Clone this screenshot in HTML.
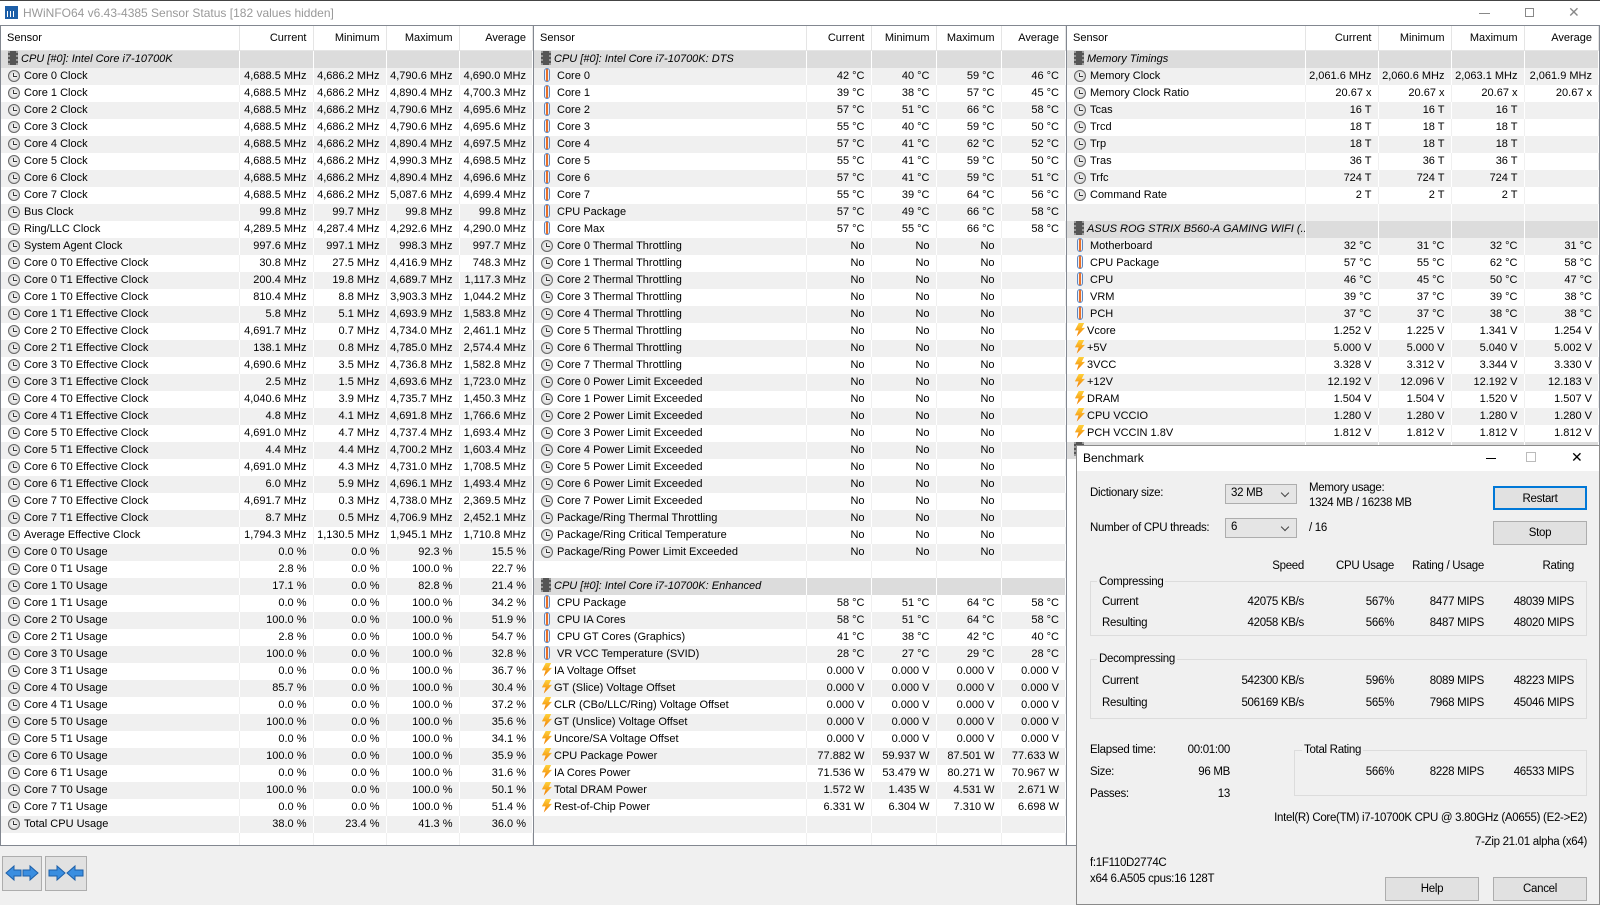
<!DOCTYPE html>
<html><head><meta charset="utf-8"><style>
*{box-sizing:border-box;margin:0;padding:0}
body{width:1600px;height:900px;overflow:hidden;background:#f0f0f0;font-family:"Liberation Sans",Arial,sans-serif;font-size:11px;color:#000;position:relative}
#tb{position:absolute;left:0;top:0;width:1600px;height:25px;background:#fff;border-top:1px solid #444}
#tb .ttl{position:absolute;left:23px;top:5px;font-size:12px;color:#999}
#tb .ico{position:absolute;left:5px;top:5px;width:13px;height:13px;background:#1d5fa8}
#tb .ico:after{content:"";position:absolute;left:2px;top:5px;width:9px;height:6px;background:repeating-linear-gradient(90deg,#fff 0 1px,transparent 1px 3px)}
.pn{position:absolute;top:25px;height:821px;border:1px solid #828790;background:#fff;overflow:hidden}
table{border-collapse:collapse;table-layout:fixed}
th{height:24px;font-weight:normal;text-align:right;padding-right:6px;border-right:1px solid #e5e5e5;border-bottom:1px solid #e5e5e5;background:#fff}
th:first-child{text-align:left;padding-left:6px}
td{height:17px;line-height:17px;padding-right:6px;text-align:right;white-space:nowrap;overflow:hidden;border-right:1px solid #f0f0f0}
td:first-child{text-align:left;padding-left:7px}
tr:nth-child(even) td{background:#f0f0f0;border-right-color:#fff}
tr.gr td{background:#dcdcdc;border-right-color:#fff;font-style:italic}
b{display:inline-block;vertical-align:-3px;margin-right:4px;position:relative}
.c{width:12px;height:12px;border:1px solid #666;border-radius:50%;background:radial-gradient(#fff,#c4c4c4)}
.c:after{content:"";position:absolute;left:4px;top:2px;width:1px;height:4px;background:#333}
.c:before{content:"";position:absolute;left:4px;top:5px;width:4px;height:1px;background:#333}
.t{width:6px;height:14px;border:1px solid #5f86bf;border-radius:3px;background:linear-gradient(90deg,#e9f1fb 30%,#e8702a 30%,#e8702a 70%,#e9f1fb 70%);margin:0 7px 0 3px}
.v{width:11px;height:14px;background:linear-gradient(#ffd23a,#f07800);clip-path:polygon(45% 0,95% 0,70% 38%,100% 38%,25% 100%,42% 56%,8% 56%);margin-right:2px;filter:drop-shadow(0 0 0 #b05000)}
.g{width:10px;height:14px;background:#555;border-left:2px dotted #999;border-right:2px dotted #999;margin-right:3px}
#dlg{position:absolute;left:1076px;top:445px;width:524px;height:460px;background:#f0f0f0;border:1px solid #8a8a8a;font-size:11.5px;letter-spacing:-0.3px}
#dlg .tt{position:absolute;left:0;top:0;width:100%;height:25px;background:#fff}
.a{position:absolute;white-space:nowrap;line-height:14px}
.r{text-align:right}
.cb{position:absolute;width:72px;height:20px;border:1px solid #adadad;background:#e5e5e5;padding:2px 0 0 5px}
.cb:after{content:"";position:absolute;right:8px;top:5px;width:5px;height:5px;border-right:1px solid #444;border-bottom:1px solid #444;transform:rotate(45deg)}
.bt{position:absolute;width:94px;height:24px;border:1px solid #adadad;background:#e1e1e1;text-align:center;line-height:22px}
.gb{position:absolute;border:1px solid #dcdcdc}
.gl{position:absolute;background:#f0f0f0;padding:0 2px;line-height:14px}
.nb{position:absolute;top:856px;height:35px;background:#e1e1e1;border:1px solid #adadad}
</style></head><body>
<div id="tb"><div class="ico"></div><div class="ttl">HWiNFO64 v6.43-4385 Sensor Status [182 values hidden]</div>
<div style="position:absolute;left:1479px;top:12px;width:11px;height:1px;background:#888"></div>
<div style="position:absolute;left:1525px;top:7px;width:9px;height:9px;border:1px solid #888;background:#fff"></div>
<div style="position:absolute;left:1568px;top:3px;font-size:14px;color:#888">✕</div>
</div>

<div class="pn" style="left:0;width:534px">
<table style="width:532px"><colgroup><col style="width:238px"><col style="width:74px"><col style="width:73px"><col style="width:73px"><col></colgroup>
<tr><th>Sensor</th><th>Current</th><th>Minimum</th><th>Maximum</th><th>Average</th></tr>
<tbody>
<tr class="gr"><td><b class="g"></b>CPU [#0]: Intel Core i7-10700K</td><td></td><td></td><td></td><td></td></tr>
<tr><td><b class="c"></b>Core 0 Clock</td><td>4,688.5 MHz</td><td>4,686.2 MHz</td><td>4,790.6 MHz</td><td>4,690.0 MHz</td></tr>
<tr><td><b class="c"></b>Core 1 Clock</td><td>4,688.5 MHz</td><td>4,686.2 MHz</td><td>4,890.4 MHz</td><td>4,700.3 MHz</td></tr>
<tr><td><b class="c"></b>Core 2 Clock</td><td>4,688.5 MHz</td><td>4,686.2 MHz</td><td>4,790.6 MHz</td><td>4,695.6 MHz</td></tr>
<tr><td><b class="c"></b>Core 3 Clock</td><td>4,688.5 MHz</td><td>4,686.2 MHz</td><td>4,790.6 MHz</td><td>4,695.6 MHz</td></tr>
<tr><td><b class="c"></b>Core 4 Clock</td><td>4,688.5 MHz</td><td>4,686.2 MHz</td><td>4,890.4 MHz</td><td>4,697.5 MHz</td></tr>
<tr><td><b class="c"></b>Core 5 Clock</td><td>4,688.5 MHz</td><td>4,686.2 MHz</td><td>4,990.3 MHz</td><td>4,698.5 MHz</td></tr>
<tr><td><b class="c"></b>Core 6 Clock</td><td>4,688.5 MHz</td><td>4,686.2 MHz</td><td>4,890.4 MHz</td><td>4,696.6 MHz</td></tr>
<tr><td><b class="c"></b>Core 7 Clock</td><td>4,688.5 MHz</td><td>4,686.2 MHz</td><td>5,087.6 MHz</td><td>4,699.4 MHz</td></tr>
<tr><td><b class="c"></b>Bus Clock</td><td>99.8 MHz</td><td>99.7 MHz</td><td>99.8 MHz</td><td>99.8 MHz</td></tr>
<tr><td><b class="c"></b>Ring/LLC Clock</td><td>4,289.5 MHz</td><td>4,287.4 MHz</td><td>4,292.6 MHz</td><td>4,290.0 MHz</td></tr>
<tr><td><b class="c"></b>System Agent Clock</td><td>997.6 MHz</td><td>997.1 MHz</td><td>998.3 MHz</td><td>997.7 MHz</td></tr>
<tr><td><b class="c"></b>Core 0 T0 Effective Clock</td><td>30.8 MHz</td><td>27.5 MHz</td><td>4,416.9 MHz</td><td>748.3 MHz</td></tr>
<tr><td><b class="c"></b>Core 0 T1 Effective Clock</td><td>200.4 MHz</td><td>19.8 MHz</td><td>4,689.7 MHz</td><td>1,117.3 MHz</td></tr>
<tr><td><b class="c"></b>Core 1 T0 Effective Clock</td><td>810.4 MHz</td><td>8.8 MHz</td><td>3,903.3 MHz</td><td>1,044.2 MHz</td></tr>
<tr><td><b class="c"></b>Core 1 T1 Effective Clock</td><td>5.8 MHz</td><td>5.1 MHz</td><td>4,693.9 MHz</td><td>1,583.8 MHz</td></tr>
<tr><td><b class="c"></b>Core 2 T0 Effective Clock</td><td>4,691.7 MHz</td><td>0.7 MHz</td><td>4,734.0 MHz</td><td>2,461.1 MHz</td></tr>
<tr><td><b class="c"></b>Core 2 T1 Effective Clock</td><td>138.1 MHz</td><td>0.8 MHz</td><td>4,785.0 MHz</td><td>2,574.4 MHz</td></tr>
<tr><td><b class="c"></b>Core 3 T0 Effective Clock</td><td>4,690.6 MHz</td><td>3.5 MHz</td><td>4,736.8 MHz</td><td>1,582.8 MHz</td></tr>
<tr><td><b class="c"></b>Core 3 T1 Effective Clock</td><td>2.5 MHz</td><td>1.5 MHz</td><td>4,693.6 MHz</td><td>1,723.0 MHz</td></tr>
<tr><td><b class="c"></b>Core 4 T0 Effective Clock</td><td>4,040.6 MHz</td><td>3.9 MHz</td><td>4,735.7 MHz</td><td>1,450.3 MHz</td></tr>
<tr><td><b class="c"></b>Core 4 T1 Effective Clock</td><td>4.8 MHz</td><td>4.1 MHz</td><td>4,691.8 MHz</td><td>1,766.6 MHz</td></tr>
<tr><td><b class="c"></b>Core 5 T0 Effective Clock</td><td>4,691.0 MHz</td><td>4.7 MHz</td><td>4,737.4 MHz</td><td>1,693.4 MHz</td></tr>
<tr><td><b class="c"></b>Core 5 T1 Effective Clock</td><td>4.4 MHz</td><td>4.4 MHz</td><td>4,700.2 MHz</td><td>1,603.4 MHz</td></tr>
<tr><td><b class="c"></b>Core 6 T0 Effective Clock</td><td>4,691.0 MHz</td><td>4.3 MHz</td><td>4,731.0 MHz</td><td>1,708.5 MHz</td></tr>
<tr><td><b class="c"></b>Core 6 T1 Effective Clock</td><td>6.0 MHz</td><td>5.9 MHz</td><td>4,696.1 MHz</td><td>1,493.4 MHz</td></tr>
<tr><td><b class="c"></b>Core 7 T0 Effective Clock</td><td>4,691.7 MHz</td><td>0.3 MHz</td><td>4,738.0 MHz</td><td>2,369.5 MHz</td></tr>
<tr><td><b class="c"></b>Core 7 T1 Effective Clock</td><td>8.7 MHz</td><td>0.5 MHz</td><td>4,706.9 MHz</td><td>2,452.1 MHz</td></tr>
<tr><td><b class="c"></b>Average Effective Clock</td><td>1,794.3 MHz</td><td>1,130.5 MHz</td><td>1,945.1 MHz</td><td>1,710.8 MHz</td></tr>
<tr><td><b class="c"></b>Core 0 T0 Usage</td><td>0.0 %</td><td>0.0 %</td><td>92.3 %</td><td>15.5 %</td></tr>
<tr><td><b class="c"></b>Core 0 T1 Usage</td><td>2.8 %</td><td>0.0 %</td><td>100.0 %</td><td>22.7 %</td></tr>
<tr><td><b class="c"></b>Core 1 T0 Usage</td><td>17.1 %</td><td>0.0 %</td><td>82.8 %</td><td>21.4 %</td></tr>
<tr><td><b class="c"></b>Core 1 T1 Usage</td><td>0.0 %</td><td>0.0 %</td><td>100.0 %</td><td>34.2 %</td></tr>
<tr><td><b class="c"></b>Core 2 T0 Usage</td><td>100.0 %</td><td>0.0 %</td><td>100.0 %</td><td>51.9 %</td></tr>
<tr><td><b class="c"></b>Core 2 T1 Usage</td><td>2.8 %</td><td>0.0 %</td><td>100.0 %</td><td>54.7 %</td></tr>
<tr><td><b class="c"></b>Core 3 T0 Usage</td><td>100.0 %</td><td>0.0 %</td><td>100.0 %</td><td>32.8 %</td></tr>
<tr><td><b class="c"></b>Core 3 T1 Usage</td><td>0.0 %</td><td>0.0 %</td><td>100.0 %</td><td>36.7 %</td></tr>
<tr><td><b class="c"></b>Core 4 T0 Usage</td><td>85.7 %</td><td>0.0 %</td><td>100.0 %</td><td>30.4 %</td></tr>
<tr><td><b class="c"></b>Core 4 T1 Usage</td><td>0.0 %</td><td>0.0 %</td><td>100.0 %</td><td>37.2 %</td></tr>
<tr><td><b class="c"></b>Core 5 T0 Usage</td><td>100.0 %</td><td>0.0 %</td><td>100.0 %</td><td>35.6 %</td></tr>
<tr><td><b class="c"></b>Core 5 T1 Usage</td><td>0.0 %</td><td>0.0 %</td><td>100.0 %</td><td>34.1 %</td></tr>
<tr><td><b class="c"></b>Core 6 T0 Usage</td><td>100.0 %</td><td>0.0 %</td><td>100.0 %</td><td>35.9 %</td></tr>
<tr><td><b class="c"></b>Core 6 T1 Usage</td><td>0.0 %</td><td>0.0 %</td><td>100.0 %</td><td>31.6 %</td></tr>
<tr><td><b class="c"></b>Core 7 T0 Usage</td><td>100.0 %</td><td>0.0 %</td><td>100.0 %</td><td>50.1 %</td></tr>
<tr><td><b class="c"></b>Core 7 T1 Usage</td><td>0.0 %</td><td>0.0 %</td><td>100.0 %</td><td>51.4 %</td></tr>
<tr><td><b class="c"></b>Total CPU Usage</td><td>38.0 %</td><td>23.4 %</td><td>41.3 %</td><td>36.0 %</td></tr>
<tr><td></td><td></td><td></td><td></td><td></td></tr>
</tbody></table></div>

<div class="pn" style="left:533px;width:534px">
<table style="width:532px"><colgroup><col style="width:272px"><col style="width:65px"><col style="width:65px"><col style="width:65px"><col></colgroup>
<tr><th>Sensor</th><th>Current</th><th>Minimum</th><th>Maximum</th><th>Average</th></tr>
<tbody>
<tr class="gr"><td><b class="g"></b>CPU [#0]: Intel Core i7-10700K: DTS</td><td></td><td></td><td></td><td></td></tr>
<tr><td><b class="t"></b>Core 0</td><td>42 °C</td><td>40 °C</td><td>59 °C</td><td>46 °C</td></tr>
<tr><td><b class="t"></b>Core 1</td><td>39 °C</td><td>38 °C</td><td>57 °C</td><td>45 °C</td></tr>
<tr><td><b class="t"></b>Core 2</td><td>57 °C</td><td>51 °C</td><td>66 °C</td><td>58 °C</td></tr>
<tr><td><b class="t"></b>Core 3</td><td>55 °C</td><td>40 °C</td><td>59 °C</td><td>50 °C</td></tr>
<tr><td><b class="t"></b>Core 4</td><td>57 °C</td><td>41 °C</td><td>62 °C</td><td>52 °C</td></tr>
<tr><td><b class="t"></b>Core 5</td><td>55 °C</td><td>41 °C</td><td>59 °C</td><td>50 °C</td></tr>
<tr><td><b class="t"></b>Core 6</td><td>57 °C</td><td>41 °C</td><td>59 °C</td><td>51 °C</td></tr>
<tr><td><b class="t"></b>Core 7</td><td>55 °C</td><td>39 °C</td><td>64 °C</td><td>56 °C</td></tr>
<tr><td><b class="t"></b>CPU Package</td><td>57 °C</td><td>49 °C</td><td>66 °C</td><td>58 °C</td></tr>
<tr><td><b class="t"></b>Core Max</td><td>57 °C</td><td>55 °C</td><td>66 °C</td><td>58 °C</td></tr>
<tr><td><b class="c"></b>Core 0 Thermal Throttling</td><td>No</td><td>No</td><td>No</td><td></td></tr>
<tr><td><b class="c"></b>Core 1 Thermal Throttling</td><td>No</td><td>No</td><td>No</td><td></td></tr>
<tr><td><b class="c"></b>Core 2 Thermal Throttling</td><td>No</td><td>No</td><td>No</td><td></td></tr>
<tr><td><b class="c"></b>Core 3 Thermal Throttling</td><td>No</td><td>No</td><td>No</td><td></td></tr>
<tr><td><b class="c"></b>Core 4 Thermal Throttling</td><td>No</td><td>No</td><td>No</td><td></td></tr>
<tr><td><b class="c"></b>Core 5 Thermal Throttling</td><td>No</td><td>No</td><td>No</td><td></td></tr>
<tr><td><b class="c"></b>Core 6 Thermal Throttling</td><td>No</td><td>No</td><td>No</td><td></td></tr>
<tr><td><b class="c"></b>Core 7 Thermal Throttling</td><td>No</td><td>No</td><td>No</td><td></td></tr>
<tr><td><b class="c"></b>Core 0 Power Limit Exceeded</td><td>No</td><td>No</td><td>No</td><td></td></tr>
<tr><td><b class="c"></b>Core 1 Power Limit Exceeded</td><td>No</td><td>No</td><td>No</td><td></td></tr>
<tr><td><b class="c"></b>Core 2 Power Limit Exceeded</td><td>No</td><td>No</td><td>No</td><td></td></tr>
<tr><td><b class="c"></b>Core 3 Power Limit Exceeded</td><td>No</td><td>No</td><td>No</td><td></td></tr>
<tr><td><b class="c"></b>Core 4 Power Limit Exceeded</td><td>No</td><td>No</td><td>No</td><td></td></tr>
<tr><td><b class="c"></b>Core 5 Power Limit Exceeded</td><td>No</td><td>No</td><td>No</td><td></td></tr>
<tr><td><b class="c"></b>Core 6 Power Limit Exceeded</td><td>No</td><td>No</td><td>No</td><td></td></tr>
<tr><td><b class="c"></b>Core 7 Power Limit Exceeded</td><td>No</td><td>No</td><td>No</td><td></td></tr>
<tr><td><b class="c"></b>Package/Ring Thermal Throttling</td><td>No</td><td>No</td><td>No</td><td></td></tr>
<tr><td><b class="c"></b>Package/Ring Critical Temperature</td><td>No</td><td>No</td><td>No</td><td></td></tr>
<tr><td><b class="c"></b>Package/Ring Power Limit Exceeded</td><td>No</td><td>No</td><td>No</td><td></td></tr>
<tr><td></td><td></td><td></td><td></td><td></td></tr>
<tr class="gr"><td><b class="g"></b>CPU [#0]: Intel Core i7-10700K: Enhanced</td><td></td><td></td><td></td><td></td></tr>
<tr><td><b class="t"></b>CPU Package</td><td>58 °C</td><td>51 °C</td><td>64 °C</td><td>58 °C</td></tr>
<tr><td><b class="t"></b>CPU IA Cores</td><td>58 °C</td><td>51 °C</td><td>64 °C</td><td>58 °C</td></tr>
<tr><td><b class="t"></b>CPU GT Cores (Graphics)</td><td>41 °C</td><td>38 °C</td><td>42 °C</td><td>40 °C</td></tr>
<tr><td><b class="t"></b>VR VCC Temperature (SVID)</td><td>28 °C</td><td>27 °C</td><td>29 °C</td><td>28 °C</td></tr>
<tr><td><b class="v"></b>IA Voltage Offset</td><td>0.000 V</td><td>0.000 V</td><td>0.000 V</td><td>0.000 V</td></tr>
<tr><td><b class="v"></b>GT (Slice) Voltage Offset</td><td>0.000 V</td><td>0.000 V</td><td>0.000 V</td><td>0.000 V</td></tr>
<tr><td><b class="v"></b>CLR (CBo/LLC/Ring) Voltage Offset</td><td>0.000 V</td><td>0.000 V</td><td>0.000 V</td><td>0.000 V</td></tr>
<tr><td><b class="v"></b>GT (Unslice) Voltage Offset</td><td>0.000 V</td><td>0.000 V</td><td>0.000 V</td><td>0.000 V</td></tr>
<tr><td><b class="v"></b>Uncore/SA Voltage Offset</td><td>0.000 V</td><td>0.000 V</td><td>0.000 V</td><td>0.000 V</td></tr>
<tr><td><b class="v"></b>CPU Package Power</td><td>77.882 W</td><td>59.937 W</td><td>87.501 W</td><td>77.633 W</td></tr>
<tr><td><b class="v"></b>IA Cores Power</td><td>71.536 W</td><td>53.479 W</td><td>80.271 W</td><td>70.967 W</td></tr>
<tr><td><b class="v"></b>Total DRAM Power</td><td>1.572 W</td><td>1.435 W</td><td>4.531 W</td><td>2.671 W</td></tr>
<tr><td><b class="v"></b>Rest-of-Chip Power</td><td>6.331 W</td><td>6.304 W</td><td>7.310 W</td><td>6.698 W</td></tr>
<tr><td></td><td></td><td></td><td></td><td></td></tr>
<tr><td></td><td></td><td></td><td></td><td></td></tr>
</tbody></table></div>

<div class="pn" style="left:1066px;width:534px">
<table style="width:532px"><colgroup><col style="width:238px"><col style="width:73px"><col style="width:73px"><col style="width:73px"><col></colgroup>
<tr><th>Sensor</th><th>Current</th><th>Minimum</th><th>Maximum</th><th>Average</th></tr>
<tbody>
<tr class="gr"><td><b class="g"></b>Memory Timings</td><td></td><td></td><td></td><td></td></tr>
<tr><td><b class="c"></b>Memory Clock</td><td>2,061.6 MHz</td><td>2,060.6 MHz</td><td>2,063.1 MHz</td><td>2,061.9 MHz</td></tr>
<tr><td><b class="c"></b>Memory Clock Ratio</td><td>20.67 x</td><td>20.67 x</td><td>20.67 x</td><td>20.67 x</td></tr>
<tr><td><b class="c"></b>Tcas</td><td>16 T</td><td>16 T</td><td>16 T</td><td></td></tr>
<tr><td><b class="c"></b>Trcd</td><td>18 T</td><td>18 T</td><td>18 T</td><td></td></tr>
<tr><td><b class="c"></b>Trp</td><td>18 T</td><td>18 T</td><td>18 T</td><td></td></tr>
<tr><td><b class="c"></b>Tras</td><td>36 T</td><td>36 T</td><td>36 T</td><td></td></tr>
<tr><td><b class="c"></b>Trfc</td><td>724 T</td><td>724 T</td><td>724 T</td><td></td></tr>
<tr><td><b class="c"></b>Command Rate</td><td>2 T</td><td>2 T</td><td>2 T</td><td></td></tr>
<tr><td></td><td></td><td></td><td></td><td></td></tr>
<tr class="gr"><td><b class="g"></b>ASUS ROG STRIX B560-A GAMING WIFI (...</td><td></td><td></td><td></td><td></td></tr>
<tr><td><b class="t"></b>Motherboard</td><td>32 °C</td><td>31 °C</td><td>32 °C</td><td>31 °C</td></tr>
<tr><td><b class="t"></b>CPU Package</td><td>57 °C</td><td>55 °C</td><td>62 °C</td><td>58 °C</td></tr>
<tr><td><b class="t"></b>CPU</td><td>46 °C</td><td>45 °C</td><td>50 °C</td><td>47 °C</td></tr>
<tr><td><b class="t"></b>VRM</td><td>39 °C</td><td>37 °C</td><td>39 °C</td><td>38 °C</td></tr>
<tr><td><b class="t"></b>PCH</td><td>37 °C</td><td>37 °C</td><td>38 °C</td><td>38 °C</td></tr>
<tr><td><b class="v"></b>Vcore</td><td>1.252 V</td><td>1.225 V</td><td>1.341 V</td><td>1.254 V</td></tr>
<tr><td><b class="v"></b>+5V</td><td>5.000 V</td><td>5.000 V</td><td>5.040 V</td><td>5.002 V</td></tr>
<tr><td><b class="v"></b>3VCC</td><td>3.328 V</td><td>3.312 V</td><td>3.344 V</td><td>3.330 V</td></tr>
<tr><td><b class="v"></b>+12V</td><td>12.192 V</td><td>12.096 V</td><td>12.192 V</td><td>12.183 V</td></tr>
<tr><td><b class="v"></b>DRAM</td><td>1.504 V</td><td>1.504 V</td><td>1.520 V</td><td>1.507 V</td></tr>
<tr><td><b class="v"></b>CPU VCCIO</td><td>1.280 V</td><td>1.280 V</td><td>1.280 V</td><td>1.280 V</td></tr>
<tr><td><b class="v"></b>PCH VCCIN 1.8V</td><td>1.812 V</td><td>1.812 V</td><td>1.812 V</td><td>1.812 V</td></tr>
<tr class="gr"><td><b class="g"></b>CPU</td><td>1,800 RPM</td><td>1,750 RPM</td><td>1,850 RPM</td><td>1,800 RPM</td></tr>
</tbody></table></div>

<div class="nb" style="left:2px;width:40px"><svg width="38" height="33" viewBox="0 0 38 33"><path d="M3 16 L11 9 V13 H18 V19 H11 V23 Z M35 16 L27 9 V13 H20 V19 H27 V23 Z" fill="#3a8ee0" stroke="#1c5fa8" stroke-width="1"/></svg></div>
<div class="nb" style="left:45px;width:42px"><svg width="40" height="33" viewBox="0 0 40 33"><path d="M19 16 L11 9 V13 H3 V19 H11 V23 Z M21 16 L29 9 V13 H37 V19 H29 V23 Z" fill="#3a8ee0" stroke="#1c5fa8" stroke-width="1"/></svg></div>

<div id="dlg">
<div class="tt"></div>
<div class="a" style="left:6px;top:5px;font-size:12px;letter-spacing:0">Benchmark</div>
<div class="a" style="left:409px;top:12px;width:10px;height:1px;background:#000"></div>
<div class="a" style="left:449px;top:6px;width:10px;height:10px;border:1px solid #bbb"></div>
<div class="a" style="left:494px;top:4px;font-size:14px;letter-spacing:0">✕</div>
<div class="a" style="left:13px;top:40px">Dictionary size:</div>
<div class="cb" style="left:148px;top:38px">32 MB</div>
<div class="a" style="left:232px;top:35px">Memory usage:</div>
<div class="a" style="left:232px;top:50px">1324 MB / 16238 MB</div>
<div class="bt" style="left:416px;top:40px;border:2px solid #0078d7">Restart</div>
<div class="a" style="left:13px;top:75px">Number of CPU threads:</div>
<div class="cb" style="left:148px;top:72px">6</div>
<div class="a" style="left:232px;top:75px">/ 16</div>
<div class="bt" style="left:416px;top:75px">Stop</div>
<div class="a r" style="right:295px;top:113px">Speed</div>
<div class="a r" style="right:205px;top:113px">CPU Usage</div>
<div class="a r" style="right:115px;top:113px">Rating / Usage</div>
<div class="a r" style="right:25px;top:113px">Rating</div>
<div class="gb" style="left:13px;top:135px;width:497px;height:55px"></div>
<div class="gl" style="left:20px;top:129px">Compressing</div>
<div class="a" style="left:25px;top:149px">Current</div>
<div class="a r" style="right:295px;top:149px">42075 KB/s</div>
<div class="a r" style="right:205px;top:149px">567%</div>
<div class="a r" style="right:115px;top:149px">8477 MIPS</div>
<div class="a r" style="right:25px;top:149px">48039 MIPS</div>
<div class="a" style="left:25px;top:170px">Resulting</div>
<div class="a r" style="right:295px;top:170px">42058 KB/s</div>
<div class="a r" style="right:205px;top:170px">566%</div>
<div class="a r" style="right:115px;top:170px">8487 MIPS</div>
<div class="a r" style="right:25px;top:170px">48020 MIPS</div>
<div class="gb" style="left:13px;top:213px;width:497px;height:60px"></div>
<div class="gl" style="left:20px;top:206px">Decompressing</div>
<div class="a" style="left:25px;top:228px">Current</div>
<div class="a r" style="right:295px;top:228px">542300 KB/s</div>
<div class="a r" style="right:205px;top:228px">596%</div>
<div class="a r" style="right:115px;top:228px">8089 MIPS</div>
<div class="a r" style="right:25px;top:228px">48223 MIPS</div>
<div class="a" style="left:25px;top:250px">Resulting</div>
<div class="a r" style="right:295px;top:250px">506169 KB/s</div>
<div class="a r" style="right:205px;top:250px">565%</div>
<div class="a r" style="right:115px;top:250px">7968 MIPS</div>
<div class="a r" style="right:25px;top:250px">45046 MIPS</div>
<div class="a" style="left:13px;top:297px">Elapsed time:</div>
<div class="a r" style="right:369px;top:297px">00:01:00</div>
<div class="a" style="left:13px;top:319px">Size:</div>
<div class="a r" style="right:369px;top:319px">96 MB</div>
<div class="a" style="left:13px;top:341px">Passes:</div>
<div class="a r" style="right:369px;top:341px">13</div>
<div class="gb" style="left:217px;top:304px;width:293px;height:46px"></div>
<div class="gl" style="left:225px;top:297px">Total Rating</div>
<div class="a r" style="right:205px;top:319px">566%</div>
<div class="a r" style="right:115px;top:319px">8228 MIPS</div>
<div class="a r" style="right:25px;top:319px">46533 MIPS</div>
<div class="a r" style="right:12px;top:365px">Intel(R) Core(TM) i7-10700K CPU @ 3.80GHz (A0655) (E2-&gt;E2)</div>
<div class="a r" style="right:12px;top:389px">7-Zip 21.01 alpha (x64)</div>
<div class="a" style="left:13px;top:410px">f:1F110D2774C</div>
<div class="a" style="left:13px;top:426px">x64 6.A505 cpus:16 128T</div>
<div class="bt" style="left:308px;top:431px">Help</div>
<div class="bt" style="left:416px;top:431px">Cancel</div>
</div>
</body></html>
